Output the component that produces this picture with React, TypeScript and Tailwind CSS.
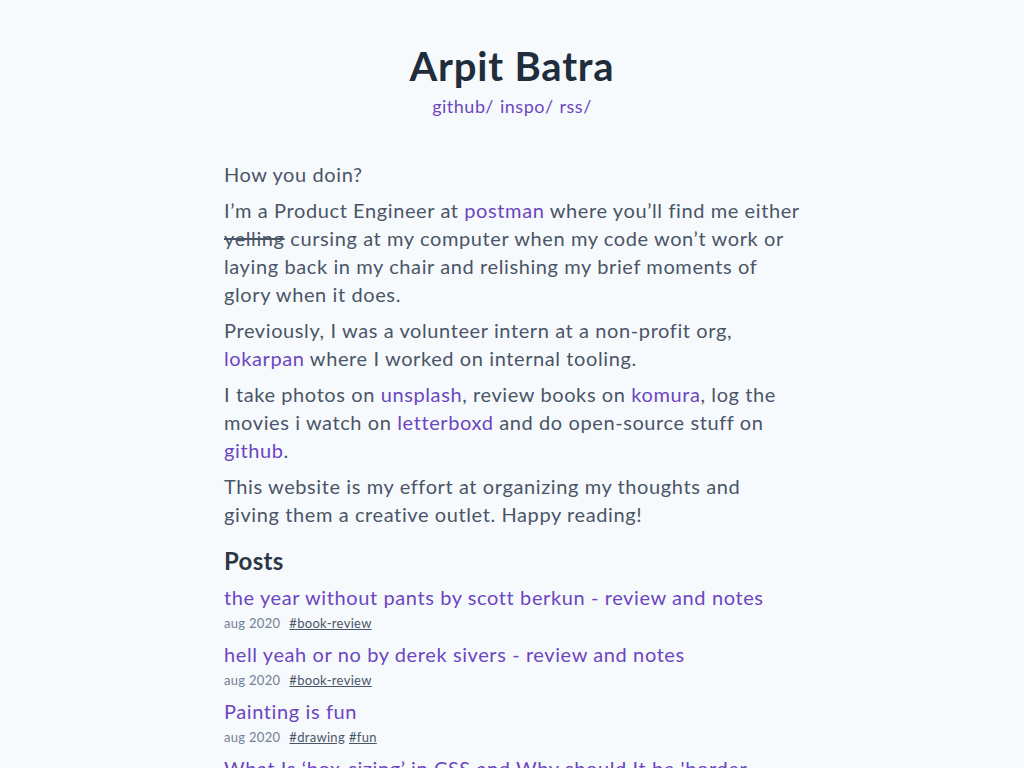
import React from "react";

const A = ({ children }: { children: React.ReactNode }) => (
  <a href="#" className="text-[#6b46c1] no-underline">{children}</a>
);

const posts = [
  { title: "the year without pants by scott berkun - review and notes", tags: ["#book-review"] },
  { title: "hell yeah or no by derek sivers - review and notes", tags: ["#book-review"] },
  { title: "Painting is fun", tags: ["#drawing", "#fun"] },
  { title: "What Is ‘box-sizing’ in CSS and Why should It be 'border-box'?", tags: ["#css"] },
];

export default function App() {
  return (
    <div
      className="min-h-screen bg-[#f7fafc] text-[#4a5568]"
      style={{ fontFamily: "Lato, 'Open Sans', sans-serif" }}
    >
      <div className="max-w-[576px] mx-auto pt-[42px]">
        <header className="text-center">
          <h1 className="text-[40px] leading-[48px] font-bold tracking-[0.8px] text-[#1f2d3d]">Arpit Batra</h1>
          <nav className="mt-[2px] text-[18px] leading-[28px] tracking-[0.5px] flex justify-center gap-[6px]">
            <A>github/</A>
            <A>inspo/</A>
            <A>rss/</A>
          </nav>
        </header>
        <main className="mt-[40px] text-[20px] leading-[28px] tracking-[0.6px]">
          <p className="mb-[8px]">How you doin?</p>
          <p className="mb-[8px]">
            I’m a Product Engineer at <A>postman</A> where you’ll find me either{" "}
            <span className="line-through">yelling</span> cursing at my computer when my code won’t work or
            laying back in my chair and relishing my brief moments of glory when it does.
          </p>
          <p className="mb-[8px]">
            Previously, I was a volunteer intern at a non-profit org, <A>lokarpan</A> where I worked on
            internal tooling.
          </p>
          <p className="mb-[8px]">
            I take photos on <A>unsplash</A>, review books on <A>komura</A>, log the movies i watch on{" "}
            <A>letterboxd</A> and do open-source stuff on <A>github</A>.
          </p>
          <p>
            This website is my effort at organizing my thoughts and giving them a creative outlet. Happy
            reading!
          </p>
          <h2 className="mt-[17px] text-[24px] leading-[32px] font-bold tracking-[0.3px] text-[#2d3748]">Posts</h2>
          <ul className="mt-[6px]">
            {posts.map((p) => (
              <li key={p.title} className="mb-[7px]">
                <A>{p.title}</A>
                <div className="pt-[2px] text-[13px] leading-[20px] tracking-[0.3px] text-[#718096] flex">
                  <span className="mr-[9px]">aug 2020</span>
                  {p.tags.map((t) => (
                    <a key={t} href="#" className="underline text-[#4a5568] mr-[4px]">
                      {t}
                    </a>
                  ))}
                </div>
              </li>
            ))}
          </ul>
        </main>
      </div>
    </div>
  );
}
